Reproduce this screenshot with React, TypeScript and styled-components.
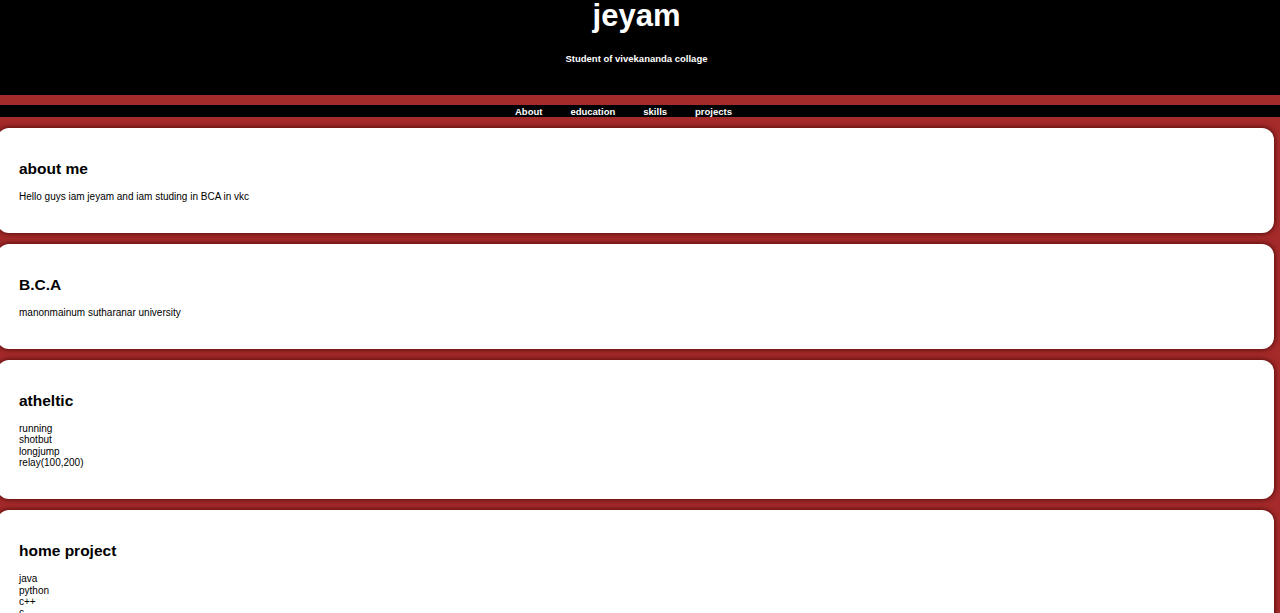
import React from "react";
import styled, { createGlobalStyle } from "styled-components";

const Global = createGlobalStyle`
  html, body {
    margin: 0;
    padding: 0;
    background: #a52a2a;
    font-family: "Liberation Sans", Arial, sans-serif;
  }
  #root { min-height: 100vh; background: #a52a2a; }
`;

const Page = styled.div`
  display: flex;
  flex-direction: column;
  background: #a52a2a;
  min-height: 100vh;
  overflow: hidden;
`;

const Header = styled.header`
  background: #000;
  color: #fff;
  height: 95px;
  display: flex;
  flex-direction: column;
  align-items: center;
  padding-right: 7px;
  box-sizing: border-box;
`;

const Title = styled.h1`
  margin: 0;
  font-size: 31px;
  line-height: 32px;
  font-weight: 700;
`;

const Subtitle = styled.p`
  margin: 21px 0 0;
  font-size: 9.5px;
  line-height: 11px;
  font-weight: 700;
`;

const Nav = styled.nav`
  background: #000;
  border-top: 10px solid #a52a2a;
  height: 12px;
  display: flex;
  justify-content: center;
  gap: 28px;
  padding-right: 33px;
  margin-bottom: 11px;
`;

const NavLink = styled.a`
  color: #fff;
  text-decoration: none;
  font-size: 9.5px;
  line-height: 13px;
  font-weight: 700;
`;

const Card = styled.section`
  background: #fff;
  border-radius: 12px;
  margin: 0 6px 11px -3px;
  padding: 32px 19px 30.5px 22px;
  box-shadow: 0 0 5px 1px rgba(60, 0, 0, 0.7);
  color: #000;
`;

const CardTitle = styled.h2`
  margin: 0 0 13px;
  font-size: 15.5px;
  line-height: 18px;
  font-weight: 700;
`;

const Text = styled.p`
  margin: 0;
  font-size: 10px;
  line-height: 11.5px;
`;

const List = styled.div`
  display: flex;
  flex-direction: column;
  font-size: 10px;
  line-height: 11.4px;
`;

const sections: { title: string; lines: string[]; list?: boolean }[] = [
  { title: "about me", lines: ["Hello guys iam jeyam and iam studing in BCA in vkc"] },
  { title: "B.C.A", lines: ["manonmainum sutharanar university"] },
  { title: "atheltic", lines: ["running", "shotbut", "longjump", "relay(100,200)"], list: true },
  { title: "home project", lines: ["java", "python", "c++", "c", "html"], list: true },
];

export default function App() {
  return (
    <>
      <Global />
      <Page>
        <Header>
          <Title>jeyam</Title>
          <Subtitle>Student of vivekananda collage</Subtitle>
        </Header>
        <Nav>
          <NavLink href="#about">About</NavLink>
          <NavLink href="#education">education</NavLink>
          <NavLink href="#skills">skills</NavLink>
          <NavLink href="#projects">projects</NavLink>
        </Nav>
        {sections.map((s) => (
          <Card key={s.title}>
            <CardTitle>{s.title}</CardTitle>
            {s.list ? (
              <List>
                {s.lines.map((l) => (
                  <span key={l}>{l}</span>
                ))}
              </List>
            ) : (
              <Text>{s.lines[0]}</Text>
            )}
          </Card>
        ))}
      </Page>
    </>
  );
}
